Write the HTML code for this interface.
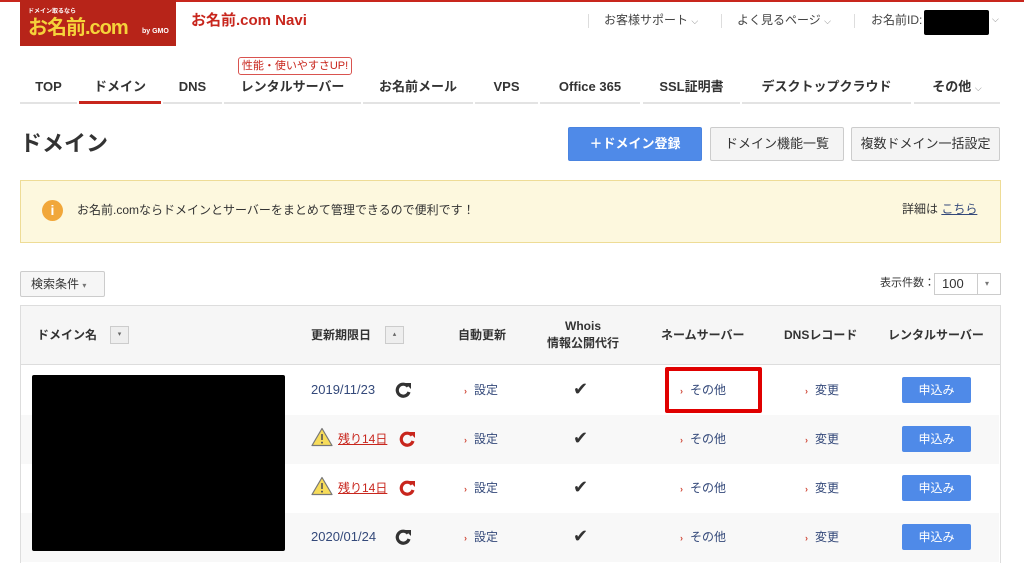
<!DOCTYPE html>
<html><head><meta charset="utf-8"><style>
*{margin:0;padding:0;box-sizing:border-box}
body{width:1024px;height:566px;overflow:hidden;background:#fff;font-family:"Liberation Sans","Noto Sans CJK JP",sans-serif;color:#333;position:relative;line-height:1.2}
.a{position:absolute;white-space:nowrap}
.tab{position:absolute;top:78px;height:26px;line-height:18px;font-size:13px;font-weight:bold;color:#333;text-align:center;border-bottom:2px solid #e3e3e3}
.btn{position:absolute;top:127px;height:34px;font-size:13px;text-align:center;line-height:32px;border:1px solid #ccc;background:#f4f4f4;border-radius:2px;color:#333}
.row{position:absolute;left:21px;width:978px;height:49px}
.c{position:absolute;font-size:12px;white-space:nowrap;line-height:16px}
.lnk{color:#34497a}
.lnk b{color:#d04a3a;font-size:9px;margin-right:7px;font-weight:bold}
.ap{position:absolute;left:881px;width:69px;height:26px;background:#4f8ae8;color:#fff;border-radius:2px;font-size:12px;text-align:center;line-height:26px}
.hd{position:absolute;font-size:12px;font-weight:bold;color:#333;text-align:center;line-height:16px}
.rf{position:absolute;width:18px;height:18px}
</style></head><body>
<div class="a" style="left:0;top:0;width:1024px;height:2px;background:#c8261d"></div>
<div class="a" style="left:20px;top:0;width:156px;height:46px;background:#b72419">
 <div class="a" style="left:8px;top:9px;font-size:6px;color:#fff;font-weight:bold">ドメイン取るなら</div>
 <div class="a" style="left:8px;top:16px;font-size:20px;color:#f5d23a;font-weight:bold;letter-spacing:-1px">お名前.com</div>
 <div class="a" style="left:122px;top:28px;font-size:7px;color:#fff;font-weight:bold">by GMO</div>
</div>
<div class="a" style="left:191px;top:12px;font-size:15px;color:#c8261d;font-weight:bold">お名前.com Navi</div>
<div class="a" style="left:588px;top:14px;width:1px;height:14px;background:#ddd"></div>
<div class="a" style="left:604px;top:13px;font-size:12px;color:#444">お客様サポート <span style="font-size:9px;color:#888">⌵</span></div>
<div class="a" style="left:721px;top:14px;width:1px;height:14px;background:#ddd"></div>
<div class="a" style="left:737px;top:13px;font-size:12px;color:#444">よく見るページ <span style="font-size:9px;color:#888">⌵</span></div>
<div class="a" style="left:854px;top:14px;width:1px;height:14px;background:#ddd"></div>
<div class="a" style="left:871px;top:13px;font-size:12px;color:#444">お名前ID:</div>
<div class="a" style="left:924px;top:10px;width:65px;height:25px;background:#000;border-radius:2px"></div>
<div class="a" style="left:992px;top:14px;font-size:9px;color:#888">⌵</div>

<div class="a" style="left:238px;top:57px;width:114px;height:18px;border:1px solid #d9534f;border-radius:3px;font-size:11px;color:#c8261d;text-align:center;line-height:16px;background:#fff">性能・使いやすさUP!</div>

<div class="tab" style="left:20px;width:57px">TOP</div>
<div class="tab" style="left:79px;width:82px;border-color:#c8261d;border-bottom-width:3px">ドメイン</div>
<div class="tab" style="left:163px;width:59px">DNS</div>
<div class="tab" style="left:224px;width:137px">レンタルサーバー</div>
<div class="tab" style="left:363px;width:110px">お名前メール</div>
<div class="tab" style="left:475px;width:63px">VPS</div>
<div class="tab" style="left:540px;width:100px">Office 365</div>
<div class="tab" style="left:643px;width:97px">SSL証明書</div>
<div class="tab" style="left:742px;width:169px">デスクトップクラウド</div>
<div class="tab" style="left:914px;width:86px">その他 <span style="font-size:9px;color:#888;font-weight:normal">⌵</span></div>

<div class="a" style="left:20px;top:131px;font-size:22px;font-weight:bold;color:#333">ドメイン</div>
<div class="btn" style="left:568px;width:134px;background:#4f8ae8;border-color:#4a84e0;color:#fff;font-weight:bold">＋ドメイン登録</div>
<div class="btn" style="left:710px;width:134px">ドメイン機能一覧</div>
<div class="btn" style="left:851px;width:149px">複数ドメイン一括設定</div>

<div class="a" style="left:20px;top:180px;width:981px;height:63px;background:#fdf8de;border:1px solid #eedc96"></div>
<div class="a" style="left:42px;top:200px;width:21px;height:21px;border-radius:50%;background:#f1a73a;color:#fff;font-size:14px;font-weight:bold;text-align:center;line-height:21px">i</div>
<div class="a" style="left:77px;top:203px;font-size:12px;color:#333">お名前.comならドメインとサーバーをまとめて管理できるので便利です！</div>
<div class="a" style="left:902px;top:202px;font-size:12px;color:#333">詳細は <span style="color:#34497a;text-decoration:underline">こちら</span></div>

<div class="a" style="left:20px;top:271px;width:85px;height:26px;border:1px solid #ccc;background:#f6f6f6;border-radius:2px;font-size:12px;line-height:24px;padding-left:10px">検索条件 <span style="font-size:8px;color:#777">▾</span></div>
<div class="a" style="left:880px;top:277px;font-size:11px;color:#333">表示件数：</div>
<div class="a" style="left:934px;top:273px;width:67px;height:22px;border:1px solid #ccc;font-size:13px;line-height:20px;padding-left:7px">100<span style="position:absolute;left:42px;top:0;width:1px;height:20px;background:#ccc"></span><span style="position:absolute;left:50px;top:0;font-size:8px;color:#777">▾</span></div>

<div class="a" style="left:20px;top:305px;width:981px;height:258px;border:1px solid #ddd;border-bottom:none"></div>
<div class="a" style="left:21px;top:306px;width:979px;height:59px;background:#f6f6f6;border-bottom:1px solid #ddd"></div>
<div class="hd" style="left:37px;top:327px">ドメイン名</div>
<div class="a" style="left:110px;top:326px;width:19px;height:18px;border:1px solid #ccc;background:#eee;font-size:7px;text-align:center;line-height:16px;color:#666">▾</div>
<div class="hd" style="left:311px;top:327px">更新期限日</div>
<div class="a" style="left:385px;top:326px;width:19px;height:18px;border:1px solid #ccc;background:#eee;font-size:7px;text-align:center;line-height:16px;color:#666">▴</div>
<div class="hd" style="left:458px;top:327px">自動更新</div>
<div class="hd" style="left:540px;top:318px;width:86px;line-height:17px">Whois<br>情報公開代行</div>
<div class="hd" style="left:661px;top:327px">ネームサーバー</div>
<div class="hd" style="left:784px;top:327px">DNSレコード</div>
<div class="hd" style="left:888px;top:327px">レンタルサーバー</div>

<div class="row" style="top:366px;background:#fff"></div>
<div class="row" style="top:415px;background:#f8f8f8"></div>
<div class="row" style="top:464px;background:#fff"></div>
<div class="row" style="top:513px;background:#f8f8f8"></div>
<div class="a" style="left:32px;top:375px;width:253px;height:176px;background:#000;border-radius:2px"></div>

<svg width="0" height="0" style="position:absolute"><defs>
<symbol id="rf" viewBox="0 0 18 18"><path d="M14 5.5A6 6 0 1 0 15 11" fill="none" stroke="currentColor" stroke-width="3.2"/><path d="M11 2h6v6z" fill="currentColor"/></symbol>
<symbol id="wn" viewBox="0 0 22 20"><path d="M11 1.5L21 18.5H1z" fill="#f7dc5a" stroke="#777" stroke-width="1.2" stroke-linejoin="round"/><path d="M11 7v6" stroke="#555" stroke-width="1.6"/><circle cx="11" cy="15.6" r="1" fill="#555"/></symbol>
</defs></svg>

<div class="c lnk" style="left:311px;top:382px;font-size:13px">2019/11/23</div>
<svg class="rf" style="left:394px;top:381px;color:#333"><use href="#rf"/></svg>
<svg class="a" style="left:311px;top:427px" width="22" height="20"><use href="#wn"/></svg>
<div class="c" style="left:338px;top:431px;color:#c8261d;text-decoration:underline;font-size:12px">残り14日</div>
<svg class="rf" style="left:398px;top:430px;color:#c8261d"><use href="#rf"/></svg>
<svg class="a" style="left:311px;top:476px" width="22" height="20"><use href="#wn"/></svg>
<div class="c" style="left:338px;top:480px;color:#c8261d;text-decoration:underline;font-size:12px">残り14日</div>
<svg class="rf" style="left:398px;top:479px;color:#c8261d"><use href="#rf"/></svg>
<div class="c lnk" style="left:311px;top:529px;font-size:13px">2020/01/24</div>
<svg class="rf" style="left:394px;top:528px;color:#333"><use href="#rf"/></svg>

<div class="c lnk" style="left:464px;top:382px"><b>›</b>設定</div>
<div class="c lnk" style="left:464px;top:431px"><b>›</b>設定</div>
<div class="c lnk" style="left:464px;top:480px"><b>›</b>設定</div>
<div class="c lnk" style="left:464px;top:529px"><b>›</b>設定</div>
<div class="c" style="left:573px;top:379px;font-size:18px;color:#333;line-height:20px">✔</div>
<div class="c" style="left:573px;top:428px;font-size:18px;color:#333;line-height:20px">✔</div>
<div class="c" style="left:573px;top:477px;font-size:18px;color:#333;line-height:20px">✔</div>
<div class="c" style="left:573px;top:526px;font-size:18px;color:#333;line-height:20px">✔</div>
<div class="a" style="left:665px;top:367px;width:97px;height:46px;border:4px solid #e00000;border-radius:2px"></div>
<div class="c lnk" style="left:680px;top:382px"><b>›</b>その他</div>
<div class="c lnk" style="left:680px;top:431px"><b>›</b>その他</div>
<div class="c lnk" style="left:680px;top:480px"><b>›</b>その他</div>
<div class="c lnk" style="left:680px;top:529px"><b>›</b>その他</div>
<div class="c lnk" style="left:805px;top:382px"><b>›</b>変更</div>
<div class="c lnk" style="left:805px;top:431px"><b>›</b>変更</div>
<div class="c lnk" style="left:805px;top:480px"><b>›</b>変更</div>
<div class="c lnk" style="left:805px;top:529px"><b>›</b>変更</div>
<div class="ap" style="left:902px;top:377px">申込み</div>
<div class="ap" style="left:902px;top:426px">申込み</div>
<div class="ap" style="left:902px;top:475px">申込み</div>
<div class="ap" style="left:902px;top:524px">申込み</div>
</body></html>
